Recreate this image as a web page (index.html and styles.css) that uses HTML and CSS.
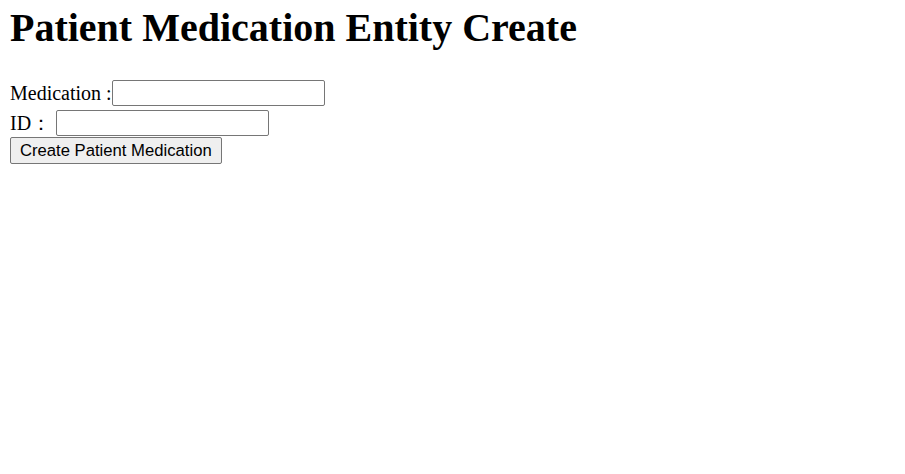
FILE: index.html
```html
<!DOCTYPE html>
<html>
<head>
<meta charset="utf-8">
<title>Patient Medication Entity Create</title>
<link rel="stylesheet" href="styles.css">
</head>
<body>
<h1 class="title">Patient Medication Entity Create</h1>
<form class="form">
  <div class="row row-first"><label class="label">Medication :</label><input class="field" type="text"></div>
  <div class="row row-second"><label class="label">ID：&nbsp;</label><input class="field" type="text"></div>
  <div class="row"><button class="btn" type="button">Create Patient Medication</button></div>
</form>
</body>
</html>
```
FILE: styles.css
```css
html, body { background: #fff; }
body {
  margin: 10px;
  font-family: "Liberation Serif", "Times New Roman", serif;
  font-size: 20px;
  color: #000;
}
.title {
  font-size: 40px;
  font-weight: bold;
  margin: 0 0 34px;
  line-height: 36px;
}
.form { margin: 0; }
.row {
  display: flex;
  align-items: flex-start;
}
.row-first { margin-bottom: 4px; }
.row-second { margin-bottom: 1px; }
.label {
  font-size: 20px;
  line-height: 26px;
  white-space: pre;
}
.field {
  font-family: "Liberation Sans", Arial, sans-serif;
  font-size: 16.67px;
  width: 213px;
  height: 26px;
  box-sizing: border-box;
  border: 1px solid #767676;
  border-radius: 2px;
  padding: 1px 2px;
  margin: 0;
}
.btn {
  font-family: "Liberation Sans", Arial, sans-serif;
  font-size: 16.67px;
  height: 27px;
  padding: 1px 9px;
  border: 1px solid #767676;
  border-radius: 2px;
  background: #efefef;
  color: #000;
  margin: 0;
}
```
